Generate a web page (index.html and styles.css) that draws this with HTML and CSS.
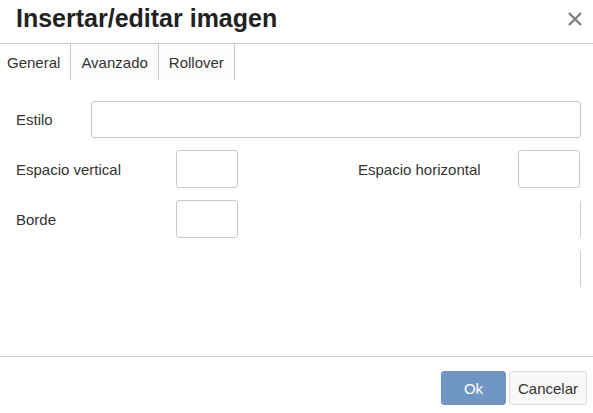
FILE: index.html
```html
<!DOCTYPE html>
<html lang="es">
<head>
    <meta charset="UTF-8">
    <meta name="viewport" content="width=device-width, initial-scale=1.0">
    <title>Insertar/editar imagen</title>
    <link rel="stylesheet" href="styles.css">
</head>
<body>
    <div class="dialog">
        <div class="header">
            <h1>Insertar/editar imagen</h1>
            <button class="close-btn" aria-label="Cerrar">
                <svg width="14" height="14" viewBox="0 0 14 14">
                    <path d="M1 1 L13 13 M13 1 L1 13" stroke="#7a7a7a" stroke-width="2.2" fill="none"/>
                </svg>
            </button>
        </div>

        <div class="tabs">
            <div class="tab active">General</div>
            <div class="tab">Avanzado</div>
            <div class="tab">Rollover</div>
        </div>

        <div class="body">
            <div class="row-wide">
                <label class="label-short">Estilo</label>
                <input class="field wide" type="text">
            </div>

            <div class="grid">
                <label class="label">Espacio vertical</label>
                <input class="field small" type="text">
                <span></span>
                <label class="label">Espacio horizontal</label>
                <input class="field small" type="text">

                <label class="label">Borde</label>
                <input class="field small" type="text">
                <span></span>
                <span></span>
                <div class="clipped"></div>

                <span></span>
                <span></span>
                <span></span>
                <span></span>
                <div class="clipped"></div>
            </div>
        </div>

        <div class="footer">
            <button class="btn primary">Ok</button>
            <button class="btn">Cancelar</button>
        </div>
    </div>
</body>
</html>
```

FILE: styles.css
```css
* {
    margin: 0;
    padding: 0;
    box-sizing: border-box;
}

body {
    font-family: 'Liberation Sans', Arial, sans-serif;
    color: #333;
    background: white;
}

.dialog {
    width: 593px;
    height: 413px;
    display: flex;
    flex-direction: column;
    overflow: hidden;
}

.header {
    height: 44px;
    display: flex;
    align-items: flex-start;
    justify-content: space-between;
    padding: 6px 10px 0 16px;
    border-bottom: 1px solid #c8c8c8;
}

.header h1 {
    font-size: 25px;
    line-height: 25px;
    font-weight: bold;
    color: #222;
}

.close-btn {
    margin-top: 5px;
    background: none;
    border: none;
    width: 16px;
    height: 16px;
    display: flex;
    align-items: center;
    justify-content: center;
    cursor: pointer;
}

.tabs {
    display: flex;
    height: 36px;
}

.tab {
    display: flex;
    align-items: center;
    padding: 0 10px;
    font-size: 15px;
    color: #333;
    border-right: 1px solid #c8c8c8;
    background: #fdfdfd;
}

.tab.active {
    background: white;
    padding-left: 7px;
}

.body {
    flex: 1;
    padding: 20px 12px 0 16px;
}

.row-wide {
    display: flex;
    align-items: center;
    height: 38px;
    margin-bottom: 12px;
}

.label-short {
    width: 75px;
    font-size: 15px;
}

.label {
    font-size: 15px;
}

.field {
    height: 38px;
    border: 1px solid #c8c8c8;
    border-radius: 3px;
    background: white;
    font-size: 15px;
    padding: 0 8px;
}

.field.wide {
    flex: 1;
    height: 37px;
}

.field.small {
    width: 62px;
}

.grid {
    display: grid;
    grid-template-columns: 160px 62px 1fr 160px 63px;
    grid-auto-rows: 38px;
    row-gap: 12px;
    align-items: center;
}

.clipped {
    justify-self: end;
    width: 1px;
    height: 36px;
    border-left: 1px solid #d0d0d0;
}

.footer {
    height: 57px;
    border-top: 1px solid #c8c8c8;
    display: flex;
    justify-content: flex-end;
    align-items: flex-start;
    gap: 3px;
    padding: 14px 6px 0 0;
}

.btn {
    height: 34px;
    padding: 0 8px;
    font-family: inherit;
    font-size: 15px;
    color: #333;
    background: #f8f8f8;
    border: 1px solid #dcdcdc;
    border-radius: 3px;
    cursor: pointer;
}

.btn.primary {
    width: 65px;
    background: #7096c3;
    border-color: #7096c3;
    color: white;
}
```
